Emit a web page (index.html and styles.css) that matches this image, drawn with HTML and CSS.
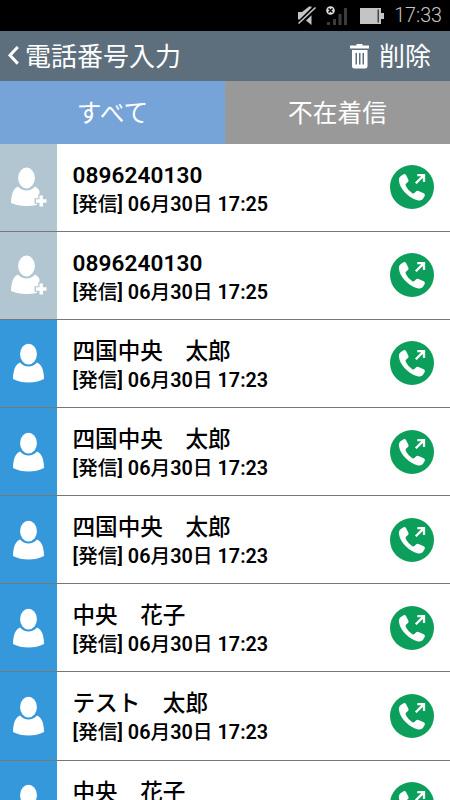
FILE: index.html
```html
<!DOCTYPE html>
<html lang="ja">
<head>
    <meta charset="UTF-8">
    <meta name="viewport" content="width=device-width, initial-scale=1.0">
    <title>電話番号入力</title>
    <link rel="stylesheet" href="styles.css">
</head>
<body>
    <!-- Shared icons -->
    <svg class="icon-defs" width="0" height="0">
        <symbol id="icon-person" viewBox="0 0 32 40">
            <ellipse cx="16.500" cy="11.200" rx="8.400" ry="10.400"/>
            <path d="M8 19.500Q11.500 23.500 16.500 23.500Q21.500 23.500 25 19.500Q29.500 21.500 31 27.500Q32 31.500 32 36Q25 39.500 16.500 39.500Q8 39.500 1 36Q1 31.500 2 27.500Q3.500 21.500 8 19.500Z"/>
        </symbol>
        <symbol id="icon-person-add" viewBox="0 0 38 40">
            <ellipse cx="16.500" cy="11" rx="8.400" ry="10.400"/>
            <path d="M8 19.500Q11.500 23.500 16.500 23.500Q21.500 23.500 25 19.500Q28 21 29.500 24.500L29.500 27.200H28.300V31.200H24.500V36.800H27V38Q22 39 16.500 39Q8 39 1 36Q1 31.500 2 27.500Q3.500 21.500 8 19.500Z"/>
            <path d="M29.500 28.500h3.400v3.800h3.600v3.400h-3.600v3.800h-3.400v-3.800h-3.600v-3.400h3.600z"/>
        </symbol>
        <symbol id="icon-call" viewBox="0 0 44 44">
            <circle cx="22" cy="22" r="22" fill="#0c9f5b"/>
            <path fill="#fff" d="M10.500 11.300L13.600 9.200Q15.200 8.600 16.100 10.200L18.400 14.800Q18.900 16.300 17.700 17.300L15.900 18.800Q15.200 19.800 15.900 21.200Q18.300 25.700 22.300 28.300Q23.500 28.900 24.400 28.100L26.200 26.300Q27.300 25.500 28.600 26.100L33.700 28.300Q35.400 29.200 34.700 30.900L33 33.700Q31.500 36 28.300 35.400Q21.800 34.200 15.500 28Q9.600 21.800 8.900 15.400Q8.700 12.800 10.500 11.300Z"/>
            <path fill="none" stroke="#fff" stroke-width="2.300" d="M25.800 18.300L33.500 10.600M27.300 10.200H34V17"/>
        </symbol>
    </svg>

    <div class="status-bar">
        <svg class="status-mute" viewBox="0 0 20 20">
            <path fill="#c4c4c4" d="M1 6h4l7-5.500h2.500v1.200L2.500 13.500H1zM9 14.500l5.500-5.200V19z"/>
            <path stroke="#c4c4c4" stroke-width="1.600" d="M1.500 17.500L18.500 1.500"/>
        </svg>
        <svg class="status-signal" viewBox="0 0 22 20">
            <path fill="#3c3c3c" d="M1 16h3v3H1zM7 13h3v6H7zM12.500 8h3v11h-3zM18 2h3v17h-3z"/>
            <circle cx="4.500" cy="4.500" r="4.300" fill="#ddd"/>
            <path stroke="#000" stroke-width="1.500" d="M2.500 2.500l4 4M6.500 2.500l-4 4"/>
        </svg>
        <svg class="status-battery" viewBox="0 0 24 18">
            <path fill="#c4c4c4" d="M0 1h21v5h3v6h-3v5H0z"/>
            <path fill="#444" d="M17.500 2.500h1.500v13h-1.500z"/>
        </svg>
        <span class="clock">17:33</span>
    </div>

    <header class="header">
        <div class="back">
            <svg class="back-icon" viewBox="0 0 12 20">
                <path fill="none" stroke="#fff" stroke-width="3" d="M10.800 1L3 9.300L10.800 17.600"/>
            </svg>
            <h1>電話番号入力</h1>
        </div>
        <div class="delete">
            <svg class="trash-icon" viewBox="0 0 20 25">
                <path fill="#fff" fill-rule="evenodd" d="M6.500 0h6v1.500H19v3H0v-3h6.500zM2 6h15.500V22q0 2.500-2.500 2.500H4.500Q2 24.500 2 22zM5.500 9v11.500H7V9zM9 9v11.500h1.500V9zM12.500 9v11.500H14V9z"/>
            </svg>
            <span>削除</span>
        </div>
    </header>

    <nav class="tabs">
        <div class="tab active">すべて</div>
        <div class="tab">不在着信</div>
    </nav>

    <ul class="history">
        <li class="row">
            <div class="avatar unknown"><svg><use href="#icon-person-add"/></svg></div>
            <div class="info">
                <div class="name number">0896240130</div>
                <div class="date">[<span>発信</span>] 06<span>月</span>30<span>日</span> 17:25</div>
            </div>
            <svg class="call"><use href="#icon-call"/></svg>
        </li>
        <li class="row">
            <div class="avatar unknown"><svg><use href="#icon-person-add"/></svg></div>
            <div class="info">
                <div class="name number">0896240130</div>
                <div class="date">[<span>発信</span>] 06<span>月</span>30<span>日</span> 17:25</div>
            </div>
            <svg class="call"><use href="#icon-call"/></svg>
        </li>
        <li class="row">
            <div class="avatar"><svg><use href="#icon-person"/></svg></div>
            <div class="info">
                <div class="name">四国中央　太郎</div>
                <div class="date">[<span>発信</span>] 06<span>月</span>30<span>日</span> 17:23</div>
            </div>
            <svg class="call"><use href="#icon-call"/></svg>
        </li>
        <li class="row">
            <div class="avatar"><svg><use href="#icon-person"/></svg></div>
            <div class="info">
                <div class="name">四国中央　太郎</div>
                <div class="date">[<span>発信</span>] 06<span>月</span>30<span>日</span> 17:23</div>
            </div>
            <svg class="call"><use href="#icon-call"/></svg>
        </li>
        <li class="row">
            <div class="avatar"><svg><use href="#icon-person"/></svg></div>
            <div class="info">
                <div class="name">四国中央　太郎</div>
                <div class="date">[<span>発信</span>] 06<span>月</span>30<span>日</span> 17:23</div>
            </div>
            <svg class="call"><use href="#icon-call"/></svg>
        </li>
        <li class="row">
            <div class="avatar"><svg><use href="#icon-person"/></svg></div>
            <div class="info">
                <div class="name">中央　花子</div>
                <div class="date">[<span>発信</span>] 06<span>月</span>30<span>日</span> 17:23</div>
            </div>
            <svg class="call"><use href="#icon-call"/></svg>
        </li>
        <li class="row">
            <div class="avatar"><svg><use href="#icon-person"/></svg></div>
            <div class="info">
                <div class="name">テスト　太郎</div>
                <div class="date">[<span>発信</span>] 06<span>月</span>30<span>日</span> 17:23</div>
            </div>
            <svg class="call"><use href="#icon-call"/></svg>
        </li>
        <li class="row">
            <div class="avatar"><svg><use href="#icon-person"/></svg></div>
            <div class="info">
                <div class="name">中央　花子</div>
            </div>
            <svg class="call"><use href="#icon-call"/></svg>
        </li>
    </ul>
</body>
</html>
```

FILE: styles.css
```css
* {
    margin: 0;
    padding: 0;
    box-sizing: border-box;
}

body {
    display: flex;
    flex-direction: column;
    height: 100vh;
    overflow: hidden;
    background: #fff;
    color: #000;
    font-family: Roboto, "Noto Sans CJK JP", sans-serif;
}

.icon-defs {
    display: none;
}

.status-bar {
    display: flex;
    flex: none;
    align-items: center;
    justify-content: flex-end;
    height: 31px;
    padding-right: 8px;
    background: #000;
    color: #c4c4c4;
}

.status-mute {
    width: 20px;
    height: 20px;
    margin-right: 9px;
}

.status-signal {
    width: 22px;
    height: 20px;
    margin-right: 12px;
}

.status-battery {
    width: 24px;
    height: 18px;
    margin-right: 10px;
}

.clock {
    padding-top: 1px;
    font-size: 19.700px;
    font-weight: 300;
    line-height: 30px;
}

.header {
    display: flex;
    flex: none;
    align-items: center;
    justify-content: space-between;
    height: 50px;
    padding: 0 19px 0 7px;
    background: #5d6e7c;
    color: #fff;
    font-size: 26px;
}

.back,
.delete {
    display: flex;
    align-items: center;
}

.back-icon {
    width: 12px;
    height: 20px;
    margin-right: 6px;
}

.header h1,
.delete span {
    padding-top: 2px;
    font-size: 26px;
    font-weight: 400;
    line-height: 48px;
}

.trash-icon {
    width: 20px;
    height: 25px;
    margin-right: 9px;
}

.tabs {
    display: flex;
    flex: none;
    height: 62.500px;
}

.tab {
    flex: 1;
    padding-top: 3px;
    background: #999;
    color: #fff;
    font-size: 24.700px;
    line-height: 60px;
    text-align: center;
}

.tab.active {
    background: #76a4d8;
}

.history {
    list-style: none;
}

.row {
    display: flex;
    align-items: center;
    height: 88.170px;
    padding-right: 16px;
    border-bottom: 1px solid #777;
}

.avatar {
    display: flex;
    align-items: center;
    align-self: stretch;
    width: 57px;
    padding-left: 12px;
    background: #3498db;
    fill: #fff;
}

.avatar svg {
    width: 32px;
    height: 40px;
}

.avatar.unknown {
    padding-left: 10px;
    background: #b2c6d1;
}

.avatar.unknown svg {
    width: 38px;
}

.info {
    flex: 1;
    align-self: stretch;
    padding: 17px 0 0 15.500px;
}

.name {
    height: 30px;
    font-size: 22.600px;
    font-weight: 500;
    line-height: 30px;
}

.number {
    font-weight: 600;
    letter-spacing: 0.1px;
}

.date {
    height: 28px;
    font-size: 19.800px;
    font-weight: 600;
    line-height: 28px;
    white-space: nowrap;
}

.date span {
    font-weight: 500;
}

.call {
    width: 44px;
    height: 44px;
}
```
